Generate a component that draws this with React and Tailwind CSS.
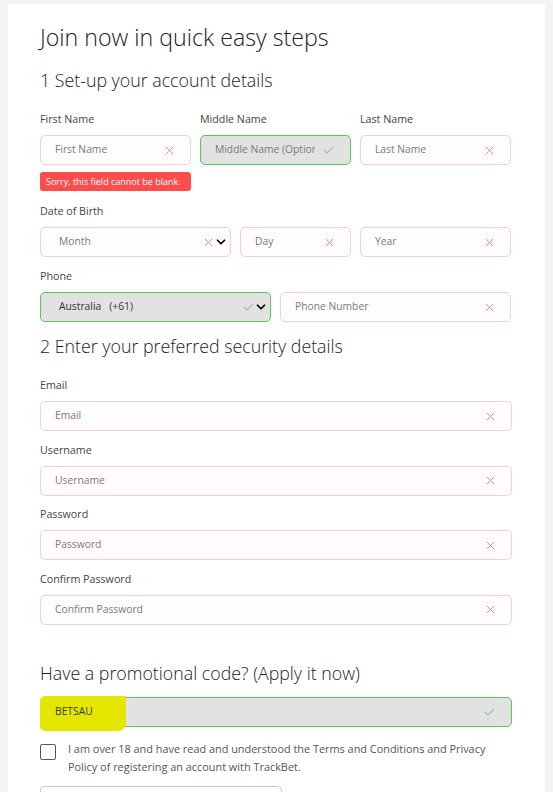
import { ChevronDown } from 'lucide-react'

const font = { fontFamily: '"Open Sans", "Noto Sans", sans-serif' }

function XIcon() {
  return (
    <svg width="9" height="9" viewBox="0 0 10 10" className="text-[#f08890] shrink-0">
      <path d="M1 1l8 8M9 1l-8 8" stroke="currentColor" strokeWidth="1.1" />
    </svg>
  )
}

function CheckIcon() {
  return (
    <svg width="11" height="8" viewBox="0 0 11 8" className="text-[#98c898] shrink-0">
      <path d="M1 4l3 3 6-6" stroke="currentColor" strokeWidth="1.1" fill="none" />
    </svg>
  )
}

function Field({ placeholder, className = '', chevron = false }) {
  return (
    <div
      className={`h-[30px] flex items-center pl-[14px] pr-[16px] rounded-[5px] border border-[#f6cfd3] bg-[#fefcfc] ${className}`}
    >
      <span className="flex-1 text-[10.3px] text-[#7a7a7a] whitespace-nowrap overflow-hidden">{placeholder}</span>
      <XIcon />
      {chevron && <ChevronDown size={14} strokeWidth={3} className="text-black -mr-[14px] ml-[1px]" />}
    </div>
  )
}

function ValidField({ children, className = '', chevron = false, dark = false, highlight = false }) {
  return (
    <div
      className={`relative h-[30px] flex items-center pl-[14px] pr-[16px] rounded-[5px] border border-[#55c855] bg-[#e2e2e2] ${className}`}
    >
      {/* marker highlight drawn over the screenshot */}
      {highlight && (
        <div className="absolute -left-[1px] -top-[2px] w-[86px] h-[35px] bg-[#e5e600] rounded-l-[5px] rounded-br-[8px]" />
      )}
      <span
        className={`relative flex-1 text-[10.3px] whitespace-nowrap overflow-hidden flex gap-[8px] ${
          dark ? 'text-[#333]' : 'text-[#7a7a7a]'
        }`}
      >
        {children}
      </span>
      <span className="ml-[8px] flex">
        <CheckIcon />
      </span>
      {chevron && <ChevronDown size={14} strokeWidth={3} className="text-black -mr-[14px]" />}
    </div>
  )
}

function Label({ children }) {
  return <p className="text-[10.7px] text-[#444] mb-[9px] leading-[14px]">{children}</p>
}

export default function App() {
  return (
    <div className="min-h-screen bg-[#f3f3f3] pt-[4px] px-[8px] overflow-hidden" style={font}>
      <div className="bg-white w-[537px] min-h-[800px] pl-[32px] pr-[33px] pt-[18px]">
        <h1 className="text-[23.2px] font-light text-[#222] leading-[30px]">Join now in quick easy steps</h1>

        <h2 className="text-[17.8px] font-light text-[#222] leading-[24px] mt-[16px]">1 Set-up your account details</h2>

        <div className="flex gap-[9px] mt-[20px]">
          <div className="w-[151px]">
            <Label>First Name</Label>
            <Field placeholder="First Name" />
            <div className="mt-[7px] h-[19px] rounded-[3px] bg-[#ff4c4c] text-white text-[9px] flex items-center pl-[6px]">
              Sorry, this field cannot be blank.
            </div>
          </div>
          <div className="w-[151px]">
            <Label>Middle Name</Label>
            <ValidField>Middle Name (Optional)</ValidField>
          </div>
          <div className="w-[151px]">
            <Label>Last Name</Label>
            <Field placeholder="Last Name" />
          </div>
        </div>

        <div className="mt-[13px]">
          <Label>Date of Birth</Label>
          <div className="flex gap-[9px]">
            <Field placeholder="Month" chevron className="w-[191px] pl-[18px]" />
            <Field placeholder="Day" className="w-[111px]" />
            <Field placeholder="Year" className="w-[151px]" />
          </div>
        </div>

        <div className="mt-[12px]">
          <Label>Phone</Label>
          <div className="flex gap-[9px]">
            <ValidField dark chevron className="w-[231px] pl-[18px]">
              <span>Australia</span>
              <span>(+61)</span>
            </ValidField>
            <Field placeholder="Phone Number" className="w-[231px]" />
          </div>
        </div>

        <h2 className="text-[17.8px] font-light text-[#222] leading-[24px] mt-[12px]">
          2 Enter your preferred security details
        </h2>

        <div className="mt-[20px] flex flex-col gap-[11.5px]">
          {['Email', 'Username', 'Password', 'Confirm Password'].map((n) => (
            <div key={n}>
              <Label>{n}</Label>
              <Field placeholder={n} className="w-[472px]" />
            </div>
          ))}
        </div>

        <h2 className="text-[17.8px] font-light text-[#222] leading-[24px] mt-[36px]">
          Have a promotional code? (Apply it now)
        </h2>

        <ValidField dark highlight className="w-[472px] mt-[12px]">
          <span className="text-[#3a3a10]">BETSAU</span>
        </ValidField>

        <div className="flex gap-[12px] mt-[17px]">
          <div className="w-[16px] h-[16px] border border-[#555] rounded-[2px] shrink-0" />
          <p className="text-[10.9px] text-[#555] leading-[18px] -mt-[4px]">
            I am over 18 and have read and understood the Terms and Conditions and Privacy Policy of registering an
            account with TrackBet.
          </p>
        </div>

        <div className="mt-[10px] w-[242px] h-[30px] border border-[#ccc] rounded-[4px]" />
      </div>
    </div>
  )
}
